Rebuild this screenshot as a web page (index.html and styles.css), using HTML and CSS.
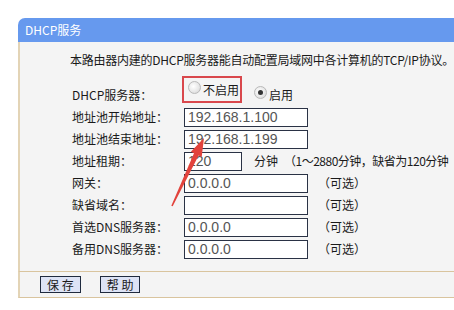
FILE: index.html
```html
<!DOCTYPE html>
<html lang="zh-CN">
<head>
<meta charset="utf-8">
<title>DHCP服务</title>
<link rel="stylesheet" href="styles.css">
</head>
<body>
<div class="panel">
  <div class="head">DHCP服务</div>
  <div class="body">
    <p class="desc">本路由器内建的DHCP服务器能自动配置局域网中各计算机的TCP/IP协议。</p>
    <div class="form">
      <div class="row">
        <span class="label">DHCP服务器：</span>
        <span class="field">
          <span class="opt mark"><span class="radio"></span>不启用</span>
          <span class="opt"><span class="radio on"></span>启用</span>
        </span>
      </div>
      <div class="row">
        <span class="label">地址池开始地址：</span>
        <span class="field"><span class="input">192.168.1.100</span></span>
      </div>
      <div class="row">
        <span class="label">地址池结束地址：</span>
        <span class="field"><span class="input">192.168.1.199</span></span>
      </div>
      <div class="row">
        <span class="label">地址租期：</span>
        <span class="field"><span class="input short">120</span><span class="unit">分钟</span><span class="hint">（1～2880分钟，缺省为120分钟</span></span>
      </div>
      <div class="row">
        <span class="label">网关：</span>
        <span class="field"><span class="input">0.0.0.0</span><span class="opt-note">（可选）</span></span>
      </div>
      <div class="row">
        <span class="label">缺省域名：</span>
        <span class="field"><span class="input"></span><span class="opt-note">（可选）</span></span>
      </div>
      <div class="row">
        <span class="label">首选DNS服务器：</span>
        <span class="field"><span class="input">0.0.0.0</span><span class="opt-note">（可选）</span></span>
      </div>
      <div class="row">
        <span class="label">备用DNS服务器：</span>
        <span class="field"><span class="input">0.0.0.0</span><span class="opt-note">（可选）</span></span>
      </div>
    </div>
  </div>
  <div class="foot">
    <span class="btn">保 存</span>
    <span class="btn">帮 助</span>
  </div>
</div>
<svg class="arrow" width="454" height="310" viewBox="0 0 454 310">
  <polygon points="204,138 201.7,156.9 198.6,155.4 172.7,206.3 171.3,205.7 194,153.2 190.9,151.7" fill="#e2433c"/>
</svg>
</body>
</html>
```
FILE: styles.css
```css
html, body {
  margin: 0;
  padding: 0;
  background: #ffffff;
}
body {
  width: 454px;
  height: 310px;
  overflow: hidden;
  position: relative;
  font-family: "Noto Sans CJK SC", "Liberation Sans", sans-serif;
  font-size: 12px;
  color: #1a1a1a;
}
.panel {
  margin: 18px 0 0 18px;
  width: 436px;
}
.head {
  height: 24px;
  line-height: 24px;
  background: #6699ee;
  color: #ffffff;
  padding-left: 7px;
  border-top-left-radius: 7px;
  font-size: 12px;
}
.body {
  background: #f4f4f4;
  border-left: 2px solid #e3d4b6;
  padding: 10px 0 12px 0;
}
.desc {
  margin: 0 0 0 50px;
  height: 16px;
  line-height: 16px;
  white-space: nowrap;
  font-size: 12px;
  letter-spacing: -0.25px;
}
.form {
  margin-top: 15px;
  display: flex;
  flex-direction: column;
}
.row {
  height: 22px;
  display: flex;
  align-items: center;
}
.label {
  width: 112px;
  padding-left: 52px;
  white-space: nowrap;
  flex-shrink: 0;
}
.field {
  display: flex;
  align-items: center;
  white-space: nowrap;
}
.opt {
  display: flex;
  align-items: center;
  gap: 2px;
}
.opt.mark {
  border: 2px solid #d9474c;
  height: 23px;
  padding: 0 1px 0 4px;
  margin: -9px 12px 0 -2px;
}
.radio {
  width: 11px;
  height: 11px;
  border-radius: 50%;
  border: 1px solid #b9b9b9;
  background: radial-gradient(circle at 40% 40%, #ffffff 0%, #e6e6e6 60%, #cfcfcf 100%);
  position: relative;
  margin-top: -4px;
}
.radio.on::after {
  content: "";
  position: absolute;
  left: 3px;
  top: 3px;
  width: 5px;
  height: 5px;
  border-radius: 50%;
  background: #333333;
}
.input {
  box-sizing: border-box;
  width: 124px;
  height: 19px;
  line-height: 17px;
  border: 1px solid #2a3245;
  background: #ffffff;
  padding-left: 3px;
  font-family: "Liberation Sans", Arial, sans-serif;
  font-size: 14px;
  color: #555555;
  margin-top: 2px;
}
.input.short {
  width: 58px;
}
.unit {
  margin-left: 12px;
}
.hint {
  margin-left: 6px;
  letter-spacing: -0.5px;
}
.opt-note {
  margin-left: 10px;
}
.foot {
  background: #f4f4f4;
  border-left: 2px solid #e3d4b6;
  border-top: 1px solid #d9c49e;
  border-bottom: 1px solid #d9c49e;
  height: 25px;
  display: flex;
  align-items: center;
  gap: 19px;
  padding-left: 20px;
}
.btn {
  box-sizing: border-box;
  height: 17px;
  line-height: 15px;
  padding: 0 6px;
  border: 1px solid #1f2a3e;
  background: #dde3f5;
  font-size: 12px;
  color: #1a1a1a;
}
.arrow {
  position: absolute;
  left: 0;
  top: 0;
  pointer-events: none;
}
```
